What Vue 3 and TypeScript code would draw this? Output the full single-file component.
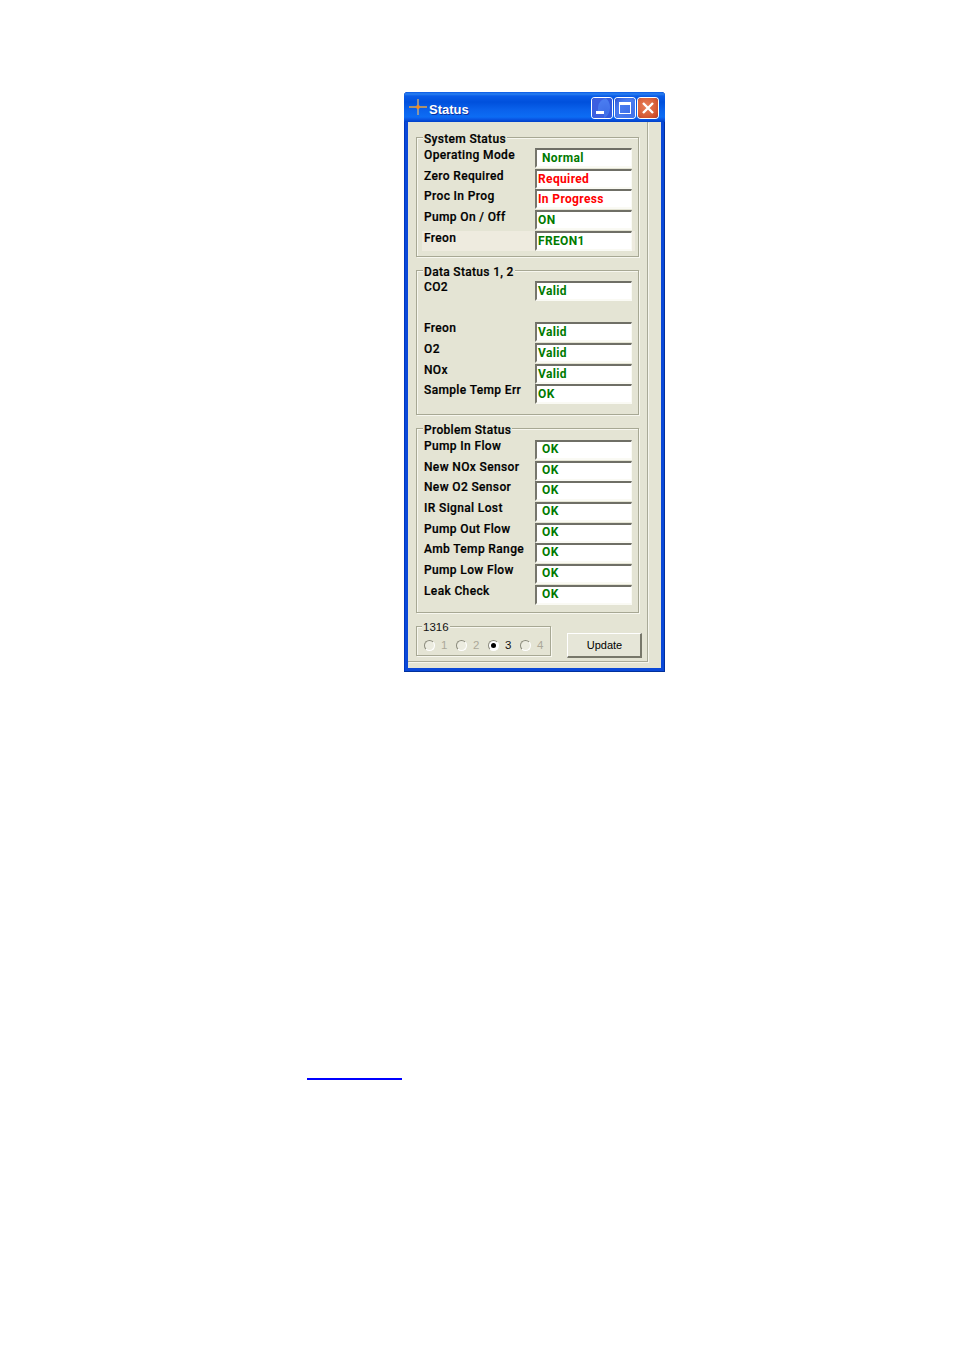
<script setup lang="ts">
interface Row { label: string; value: string; tone: 'green' | 'red'; indent?: boolean; hi?: boolean; spacer?: boolean }
const systemRows: Row[] = [
  { label: 'Operating Mode', value: 'Normal', tone: 'green', indent: true },
  { label: 'Zero Required', value: 'Required', tone: 'red' },
  { label: 'Proc In Prog', value: 'In Progress', tone: 'red' },
  { label: 'Pump On / Off', value: 'ON', tone: 'green' },
  { label: 'Freon', value: 'FREON1', tone: 'green', hi: true },
]
const dataRows: Row[] = [
  { label: 'CO2', value: 'Valid', tone: 'green' },
  { label: '', value: '', tone: 'green', spacer: true },
  { label: 'Freon', value: 'Valid', tone: 'green' },
  { label: 'O2', value: 'Valid', tone: 'green' },
  { label: 'NOx', value: 'Valid', tone: 'green' },
  { label: 'Sample Temp Err', value: 'OK', tone: 'green' },
]
const problemRows: Row[] = ['Pump In Flow', 'New NOx Sensor', 'New O2 Sensor', 'IR Signal Lost', 'Pump Out Flow', 'Amb Temp Range', 'Pump Low Flow', 'Leak Check'].map((label) => ({ label, value: 'OK', tone: 'green', indent: true }))
const groups = [
  { title: 'System Status', rows: systemRows, cls: 'g1' },
  { title: 'Data Status 1, 2', rows: dataRows, cls: 'g2' },
  { title: 'Problem Status', rows: problemRows, cls: 'g3' },
]
const radios = [
  { n: 1, on: false },
  { n: 2, on: false },
  { n: 3, on: true },
  { n: 4, on: false },
]
</script>

<template>
  <div class="page">
    <div class="window">
      <div class="titlebar">
        <svg class="appicon" width="18" height="18" viewBox="0 0 18 18">
          <path d="M0 9 H18" stroke="#f2a93a" stroke-width="1.4" />
          <path d="M9 1 V17" stroke="#e8b870" stroke-width="1.2" />
          <circle cx="9" cy="9" r="2" fill="#f58a1f" />
        </svg>
        <span class="title">Status</span>
        <div class="caption-buttons">
          <div class="cbtn blue">
            <svg width="20" height="20" viewBox="0 0 20 20">
              <path d="M0 0 H14 C8 2 6 6 6 11 C6 13 6 13 4 13 L4 16 L12 16 L12 20 H0 Z" fill="#3c5fe0" />
              <path d="M14 0 H20 V20 H12 C16 18 18 14 18 9 C18 5 16 2 14 0 Z" fill="#3359dc" />
              <rect x="4" y="13" width="8" height="3" fill="#fff" />
            </svg>
          </div>
          <div class="cbtn blue">
            <svg width="20" height="20" viewBox="0 0 20 20">
              <rect x="4.5" y="4.5" width="11" height="11" fill="none" stroke="#fff" />
              <rect x="4" y="4" width="12" height="3" fill="#fff" />
            </svg>
          </div>
          <div class="cbtn red">
            <svg width="20" height="20" viewBox="0 0 20 20">
              <path d="M5 5 L15 15 M15 5 L5 15" stroke="#fff" stroke-width="2.4" />
            </svg>
          </div>
        </div>
      </div>
      <div class="client">
        <div class="panel">
          <div v-for="g in groups" :key="g.title" class="group" :class="g.cls">
            <span class="legend">{{ g.title }}</span>
            <div v-for="(r, i) in g.rows" :key="i" class="row" :class="{ hi: r.hi, spacer: r.spacer }">
              <template v-if="!r.spacer">
                <span class="label">{{ r.label }}</span>
                <span class="field" :class="[r.tone, { indent: r.indent }]">{{ r.value }}</span>
              </template>
            </div>
          </div>
          <div class="footer">
            <div class="radiogroup">
              <span class="legend-plain">1316</span>
              <div class="radios">
                <span v-for="r in radios" :key="r.n" class="radio-item" :class="{ on: r.on }">
                  <span class="radio"><span v-if="r.on" class="dot"></span></span>
                  <span class="radio-text">{{ r.n }}</span>
                </span>
              </div>
            </div>
            <div class="button">Update</div>
          </div>
        </div>
      </div>
    </div>
    <div class="link-line"></div>
  </div>
</template>

<style>
html, body { margin: 0; background: #fff; }
</style>

<style scoped>
.page {
  width: 954px;
  height: 1350px;
  background: #fff;
  padding-top: 92px;
  box-sizing: border-box;
  font-family: Roboto, "Liberation Sans", Arial, sans-serif;
}
.window {
  width: 261px;
  height: 580px;
  margin-left: 404px;
  box-sizing: border-box;
  display: flex;
  flex-direction: column;
  background: #0a48d8;
  border-radius: 4px 4px 0 0;
  padding: 0 4px 4px;
  box-shadow: inset 0 -1px 0 #00309c, inset 1px 0 0 #0038c0, inset -1px 0 0 #00309c;
}
.titlebar {
  height: 30px;
  margin: 0 -4px;
  flex: none;
  display: flex;
  align-items: center;
  padding: 0 7px 0 5px;
  border-radius: 4px 4px 0 0;
  background: linear-gradient(#0a5ae6 0, #2a80f0 2px, #0a5ce8 4px, #0050dc 10px, #0a62ec 18px, #0c6cf4 25px, #0a58e6 27px, #0040c8 30px);
}
.appicon { flex: none; margin-top: -1px; }
.title {
  margin: 5px 0 0 2px;
  color: #fff;
  font-family: "Liberation Sans", Arial, sans-serif;
  font-size: 13px;
  font-weight: 700;
  text-shadow: 1px 1px 0 #0a2f9c;
}
.caption-buttons { margin-left: auto; margin-top: 2px; display: flex; gap: 3px; }
.cbtn {
  width: 20px;
  height: 20px;
  border-radius: 3px;
  box-shadow: 0 0 0 1px #fff;
  overflow: hidden;
}
.cbtn svg { display: block; }
.cbtn.blue { background: radial-gradient(circle at 70% 70%, #3f6fe8, #4a7cf0 60%, #2c50cf); }
.cbtn.red { background: radial-gradient(circle at 40% 40%, #e9805a, #d8603a 55%, #c23a1c); }
.client {
  flex: 1;
  background: #e4e4d4;
  padding-bottom: 7px;
  display: flex;
  flex-direction: column;
  min-height: 0;
}
.panel {
  flex: 1;
  width: 240px;
  box-sizing: border-box;
  border-right: 1px solid #a9aa98;
  border-bottom: 1px solid #a9aa98;
  padding: 15px 0 0 8px;
  box-shadow: 1px 1px 0 #f6f6ee;
}
.group {
  position: relative;
  margin: 0 0 13px;
  padding: 10px 6px 0 7px;
  width: 223px;
  box-sizing: border-box;
  border: 1px solid #a7a894;
  box-shadow: inset 1px 1px 0 #f7f7ef, 1px 1px 0 #f7f7ef;
}
.g1 { height: 120px; }
.g2 { height: 145px; }
.g3 { height: 185px; padding-top: 11px; }
.legend {
  position: absolute;
  top: -5px;
  left: 6px;
  padding: 0 1px;
  background: #e4e4d4;
  font-size: 12px;
  font-weight: 500;
  line-height: 13px;
  letter-spacing: .32px;
  color: #000;
  -webkit-text-stroke: .2px #000;
  white-space: nowrap;
}
.row {
  height: 20.7px;
  display: flex;
  justify-content: space-between;
}
.spacer { visibility: hidden; }
.row.hi { background: #eeebdf; margin: 0 -3px 0 -2px; padding: 0 3px 0 2px; }
.label {
  margin-top: -1px;
  font-size: 12px;
  font-weight: 500;
  line-height: 14px;
  letter-spacing: .36px;
  -webkit-text-stroke: .2px #000;
  color: #000;
  white-space: nowrap;
}
.g1 .label { line-height: 16px; }
.g2 .label { line-height: 15px; }
.field {
  flex: none;
  width: 97px;
  height: 20px;
  box-sizing: border-box;
  background: #fff;
  border-top: 2px solid #6f6f66;
  border-left: 2px solid #76766c;
  border-right: 1px solid #fafaf4;
  border-bottom: 2px solid #fafaf4;
  padding-left: 1px;
  font-size: 12px;
  font-weight: 700;
  line-height: 15px;
  letter-spacing: .36px;
}
.g1 .field { line-height: 17px; }
.g2 .field { line-height: 16px; }
.field.indent { padding-left: 5px; }
.green { color: #007a00; }
.red { color: #ff0000; }
.footer {
  display: flex;
  height: 35px;
  align-items: flex-start;
}
.radiogroup {
  position: relative;
  padding: 12px 0 0 7px;
  width: 135px;
  height: 30px;
  box-sizing: border-box;
  border: 1px solid #a7a894;
  box-shadow: inset 1px 1px 0 #f7f7ef, 1px 1px 0 #f7f7ef;
}
.legend-plain {
  position: absolute;
  top: -6px;
  left: 5px;
  padding: 0 1px;
  background: #e4e4d4;
  font-family: "Liberation Sans", Arial, sans-serif;
  font-size: 11.5px;
  line-height: 13px;
  color: #111;
}
.radios { display: flex; }
.radio-item {
  width: 32px;
  display: flex;
  align-items: center;
  color: #aca899;
  font-family: "Liberation Sans", Arial, sans-serif;
  font-size: 11.5px;
  line-height: 12px;
  flex: none;
}
.radio-item.on { color: #111; }
.radio {
  width: 11px;
  height: 11px;
  box-sizing: border-box;
  border: 1px solid;
  border-color: #8a8a7c #fff #fff #8a8a7c;
  border-radius: 50%;
  background: #ecece0;
  display: flex;
  align-items: center;
  justify-content: center;
  margin-right: 6px;
}
.radio-item.on .radio { background: #fff; }
.dot { width: 5px; height: 5px; border-radius: 50%; background: #000; }
.button {
  margin-left: 16px;
  margin-top: 7px;
  width: 75px;
  height: 25px;
  box-sizing: border-box;
  padding-left: 1px;
  background: #e6e6d8;
  border-top: 1px solid #fff;
  border-left: 1px solid #fff;
  border-right: 2px solid #77776a;
  border-bottom: 2px solid #77776a;
  color: #000;
  font-family: "Liberation Sans", Arial, sans-serif;
  font-size: 11px;
  line-height: 22px;
  text-align: center;
}
.link-line {
  margin-top: 406px;
  margin-left: 307px;
  width: 95px;
  height: 2px;
  background: #0000ff;
}
</style>
